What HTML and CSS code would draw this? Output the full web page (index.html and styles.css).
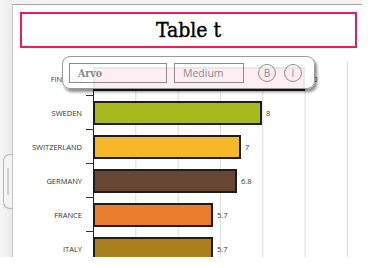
FILE: index.html
```html
<!DOCTYPE html>
<html>
<head>
  <meta charset="utf-8">
  <title>Table t</title>
  <link rel="stylesheet" href="styles.css">
</head>
<body>
  <div class="stage">
    <div class="gutter">
      <div class="handle"><span></span></div>
    </div>

    <div class="panel">
      <div class="title">Table t</div>

      <!-- bar chart, one row per country -->
      <div class="chart">
        <div class="row">
          <div class="label">Finland</div>
          <div class="tick"></div>
          <div class="plot"><div class="bar pink" style="width:212px"></div><span class="value">10</span></div>
        </div>
        <div class="row">
          <div class="label">Sweden</div>
          <div class="tick"></div>
          <div class="plot"><div class="bar olive" style="width:169px"></div><span class="value">8</span></div>
        </div>
        <div class="row">
          <div class="label">Switzerland</div>
          <div class="tick"></div>
          <div class="plot"><div class="bar yellow" style="width:148px"></div><span class="value">7</span></div>
        </div>
        <div class="row">
          <div class="label">Germany</div>
          <div class="tick"></div>
          <div class="plot"><div class="bar brown" style="width:144px"></div><span class="value dark">6.8</span></div>
        </div>
        <div class="row">
          <div class="label">France</div>
          <div class="tick"></div>
          <div class="plot"><div class="bar orange" style="width:120px"></div><span class="value">5.7</span></div>
        </div>
        <div class="row">
          <div class="label">Italy</div>
          <div class="tick"></div>
          <div class="plot"><div class="bar gold" style="width:120px"></div><span class="value">5.7</span></div>
        </div>
      </div>

      <!-- floating text toolbar -->
      <div class="toolbar">
        <div class="field font">Arvo</div>
        <div class="field weight">Medium</div>
        <div class="round">B</div>
        <div class="round">I</div>
      </div>
    </div>
  </div>
</body>
</html>
```

FILE: styles.css
```css
body {
  margin: 0;
  background: #fff;
  font-family: "Open Sans", Arial, sans-serif;
  overflow: hidden;
}

.stage {
  display: flex;
  width: 362px;
  height: 257px;
  background: #f3f3f3;
  overflow: hidden;
}

.gutter {
  flex: 0 0 12px;
  padding-top: 154px;
  background: linear-gradient(to right, #f6f6f6, #ebebeb);
}

.handle {
  margin-left: 3px;
  width: 9px;
  height: 55px;
  box-sizing: border-box;
  border: 1px solid #b5b5b5;
  border-right: none;
  border-radius: 7px 0 0 7px;
  background: #f4f4f4;
  padding: 13px 0 0 3px;
}
.handle span {
  display: block;
  width: 2px;
  height: 27px;
  background: #d0d0d0;
}

.panel {
  position: relative;
  flex: 1;
  margin-top: 4px;
  background: #fff;
  border-top: 1px solid #a8a8a8;
  border-left: 1px solid #c4c4c4;
}

.title {
  margin: 7px 5px 0 7px;
  height: 36px;
  box-sizing: border-box;
  border: 2px solid #ef1a5c;
  font-family: "DejaVu Serif", serif;
  font-stretch: condensed;
  font-size: 21px;
  line-height: 32px;
  text-align: center;
  color: #000;
  -webkit-text-stroke: 0.4px #000;
}

.chart {
  margin-top: 14px;
}

.row {
  display: grid;
  grid-template-columns: 69px 11px 256px;
  height: 34px;
}

.label {
  align-self: center;
  text-align: right;
  font-size: 7.5px;
  text-transform: uppercase;
  color: #333;
}

.tick {
  align-self: end;
  justify-self: end;
  width: 7px;
  height: 1px;
  background: #333;
}

.plot {
  display: flex;
  align-items: center;
  background:
    linear-gradient(#222, #222) 0 0 / 1px 100% no-repeat,
    linear-gradient(to right, #dcdcdc 1px, transparent 1px) 0 0 / 42.33px 100%;
}

.bar {
  height: 24px;
  box-sizing: border-box;
  border: 2px solid #1d1d1d;
}
.pink { background: #ee4a78; }
.olive { background: #a9b81c; }
.yellow { background: #f6b829; }
.brown { background: #674733; }
.orange { background: #e97e2f; }
.gold { background: #aa811e; }

.value {
  margin-left: 4px;
  font-size: 7.5px;
  color: #333;
}
.value.dark { color: #2a3b4a; }

.toolbar {
  position: absolute;
  left: 49px;
  top: 51px;
  width: 253px;
  height: 33px;
  box-sizing: border-box;
  display: flex;
  align-items: center;
  padding-left: 6px;
  border: 1px solid #9a9a9a;
  border-radius: 8px;
  background: rgba(255, 255, 255, 0.9);
  box-shadow: 2px 3px 3px rgba(0, 0, 0, 0.45);
}

.field {
  height: 20px;
  box-sizing: border-box;
  border: 1px solid #8c8c8c;
  padding-left: 8px;
  font-size: 10.5px;
  line-height: 18px;
  color: #8a8a8a;
}
.font {
  width: 98px;
  font-family: "DejaVu Serif", serif;
  font-stretch: condensed;
  font-weight: bold;
}
.weight {
  width: 70px;
  margin-left: 7px;
}

.round {
  width: 18px;
  height: 18px;
  box-sizing: border-box;
  border: 1px solid #8c8c8c;
  border-radius: 50%;
  margin-left: 14px;
  text-align: center;
  font-size: 10px;
  line-height: 16px;
  color: #8a8a8a;
}
.round + .round { margin-left: 8px; }
```
